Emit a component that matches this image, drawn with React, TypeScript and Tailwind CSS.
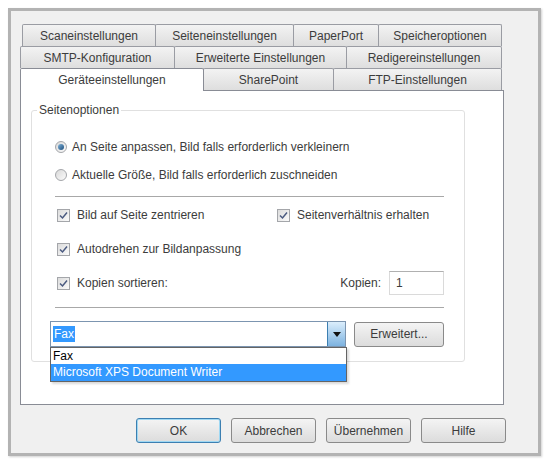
import type { ReactNode } from 'react';

const FONT = "font-['Liberation_Sans',Arial,sans-serif]";

interface TabProps {
  label: string;
  className: string;
  active?: boolean;
}

function Tab({ label, className, active }: TabProps) {
  if (active) {
    return (
      <div
        className={`relative z-10 -mb-px flex h-[23px] items-center justify-center rounded-t-[2px] border border-b-0 border-[#898c95] bg-white text-[12px] text-[#3c3c3c] ${className}`}
      >
        {label}
      </div>
    );
  }
  return (
    <div
      className={`-ml-px flex h-[22px] items-center justify-center rounded-t-[2px] border border-b-0 border-[#9a9ca3] bg-gradient-to-b from-[#f3f3f3] to-[#dedede] text-[12px] text-[#3c3c3c] first:ml-0 ${className}`}
    >
      {label}
    </div>
  );
}

function Radio({ checked, children }: { checked?: boolean; children: ReactNode }) {
  return (
    <div className="ml-[5px] flex h-5 items-center gap-[5px]">
      <span className="flex h-[12px] w-[12px] items-center justify-center rounded-full border border-[#a4a6aa] bg-gradient-to-br from-[#d9d9d9] to-[#fbfbfb]">
        {checked && (
          <span className="h-[6px] w-[6px] rounded-full bg-gradient-to-br from-[#7fb2d8] to-[#1d4f7d]" />
        )}
      </span>
      <span>{children}</span>
    </div>
  );
}

function Checkbox({ children, className = '' }: { children: ReactNode; className?: string }) {
  return (
    <div className={`flex items-center gap-[7px] ${className}`}>
      <span className="flex h-[13px] w-[13px] items-center justify-center border border-[#a4a6aa] bg-gradient-to-br from-[#dcdcdc] to-[#fafafa]">
        <svg width="9" height="9" viewBox="0 0 9 9">
          <path d="M1 4.5 L3.5 7 L8 1.5" fill="none" stroke="#4a5a80" strokeWidth="1.5" />
        </svg>
      </span>
      <span>{children}</span>
    </div>
  );
}

function Button({ children, focused }: { children: ReactNode; focused?: boolean }) {
  return (
    <button
      type="button"
      className={`flex h-[25px] w-[85px] items-center justify-center rounded-[3px] border bg-gradient-to-b from-[#f4f4f4] to-[#dcdcdc] text-[12px] text-[#3c3c3c] ${
        focused ? 'border-[#3c7fb1] shadow-[inset_0_0_0_1px_#9fd8f3]' : 'border-[#8a8a8a]'
      }`}
    >
      {children}
    </button>
  );
}

export default function App() {
  return (
    <div className={`h-[462px] w-[548px] bg-white pl-2 pt-2 ${FONT}`}>
      <div className="flex h-[448px] w-[533px] flex-col border-[3px] border-[#b3b3b3] bg-[#f0f0f0] pl-[9px] pt-[13px] shadow-[1px_1px_2px_#d0d0d0]">
        {/* tab strip, three rows */}
        <div className="ml-[2px] flex w-[480px]">
          <Tab label="Scaneinstellungen" className="w-[134px]" />
          <Tab label="Seiteneinstellungen" className="w-[139px]" />
          <Tab label="PaperPort" className="w-[86px]" />
          <Tab label="Speicheroptionen" className="w-[124px]" />
        </div>
        <div className="flex w-[482px]">
          <Tab label="SMTP-Konfiguration" className="w-[155px]" />
          <Tab label="Erweiterte Einstellungen" className="w-[173px]" />
          <Tab label="Redigereinstellungen" className="w-[156px]" />
        </div>
        <div className="flex w-[484px]">
          <Tab label="Geräteeinstellungen" className="w-[184px]" active />
          <Tab label="SharePoint" className="w-[131px]" />
          <Tab label="FTP-Einstellungen" className="w-[169px]" />
        </div>

        {/* tab page */}
        <div className="h-[315px] w-[484px] border border-[#898c95] bg-white pl-[10px] pt-[12px] text-[12px] text-[#3c3c3c]">
          <fieldset className="w-[425px] rounded-[3px] border border-[#e0e0e0]">
            <legend className="ml-[5px] px-[2px] leading-[15px]">Seitenoptionen</legend>
            <div className="pb-[14px] pl-[18px] pr-[20px] pt-[19px]">
              <Radio checked>An Seite anpassen, Bild falls erforderlich verkleinern</Radio>
              <div className="mt-2">
                <Radio>Aktuelle Größe, Bild falls erforderlich zuschneiden</Radio>
              </div>
              <div className="ml-[5px] mt-[11px] h-px bg-[#a8a8a8]" />

              <div className="ml-[7px] mt-[8px] flex h-5 items-center">
                <Checkbox className="w-[220px]">Bild auf Seite zentrieren</Checkbox>
                <Checkbox>Seitenverhältnis erhalten</Checkbox>
              </div>
              <Checkbox className="ml-[7px] mt-[14px] h-5">Autodrehen zur Bildanpassung</Checkbox>
              <div className="ml-[7px] mt-[12px] flex h-6 items-center justify-between">
                <Checkbox>Kopien sortieren:</Checkbox>
                <div className="flex items-center gap-[8px]">
                  <span>Kopien:</span>
                  <div className="flex h-6 w-[55px] items-center border border-[#dadada] border-t-[#b0b0b0] pl-[6px]">
                    1
                  </div>
                </div>
              </div>
              <div className="ml-[5px] mt-[12px] h-px bg-[#a8a8a8]" />

              <div className="mt-[13px] flex h-[26px] items-center gap-[8px]">
                <div className="relative flex h-[26px] w-[296px] items-center border border-[#7c95b0] bg-white">
                  <span className="ml-[2px] bg-[#3399ff] px-[1px] leading-[16px] text-white">Fax</span>
                  <span className="ml-auto flex h-full w-[18px] items-center justify-center border-l border-[#3c7fb1] bg-gradient-to-b from-[#dbeefc] to-[#7db3e0]">
                    <svg width="8" height="5" viewBox="0 0 8 5">
                      <path d="M0 0 H8 L4 5 Z" fill="#111" />
                    </svg>
                  </span>
                  {/* open drop-down list */}
                  <div className="absolute left-[-1px] top-[25px] z-20 w-[297px] border border-[#646464] bg-white text-black shadow-[2px_2px_2px_rgba(0,0,0,0.15)]">
                    <div className="h-[16px] pl-[2px] leading-[16px]">Fax</div>
                    <div className="h-[17px] bg-[#3399ff] pl-[2px] leading-[17px] text-white">
                      Microsoft XPS Document Writer
                    </div>
                  </div>
                </div>
                <button
                  type="button"
                  className="flex h-[25px] w-[90px] items-center justify-center rounded-[3px] border border-[#8a8a8a] bg-gradient-to-b from-[#f4f4f4] to-[#dcdcdc] text-[#3c3c3c]"
                >
                  Erweitert...
                </button>
              </div>
            </div>
          </fieldset>
        </div>

        {/* dialog buttons */}
        <div className="mt-[13px] flex w-[486px] justify-end gap-[10px]">
          <Button focused>OK</Button>
          <Button>Abbrechen</Button>
          <Button>Übernehmen</Button>
          <Button>Hilfe</Button>
        </div>
      </div>
    </div>
  );
}
